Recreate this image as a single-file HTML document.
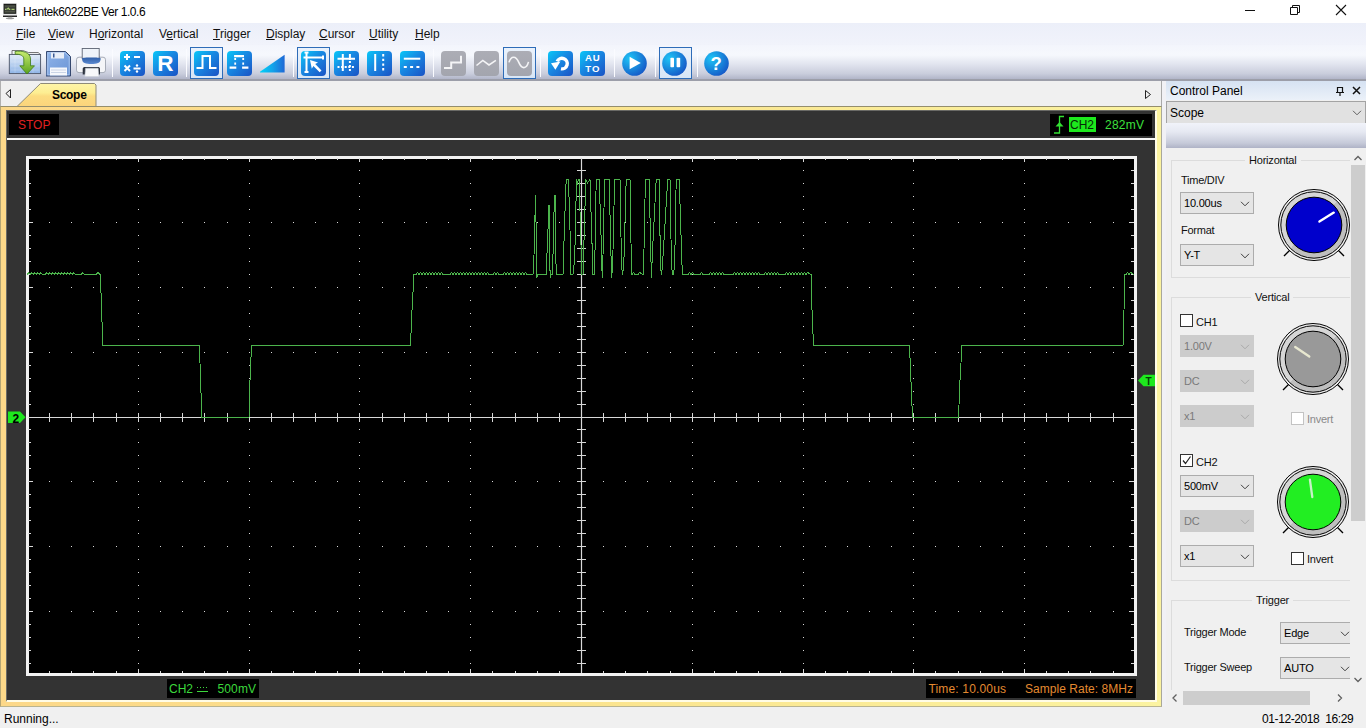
<!DOCTYPE html>
<html><head><meta charset="utf-8"><title>Hantek6022BE</title>
<style>
*{margin:0;padding:0;box-sizing:border-box}
html,body{width:1366px;height:728px;overflow:hidden;background:#f0f0f0;font-family:"Liberation Sans",sans-serif;font-size:12px;color:#000}
.a{position:absolute}
#title{left:0;top:0;width:1366px;height:23px;background:#fff}
#menu{left:0;top:23px;width:1366px;height:22px;background:linear-gradient(#eceff9,#f1f3fb)}
#menu span{position:absolute;top:4px;font-size:12px;color:#111}
#tool{left:0;top:45px;width:1366px;height:36px;background:linear-gradient(#f3f5fc 0%,#f6f8fd 28%,#e4e7f1 50%,#c9cddc 80%,#b2b6c9 94%,#9c9ea9 95%,#9c9ea9 100%)}
.sep{position:absolute;top:4px;width:1px;height:28px;background:#c9ccd6;border-right:1px solid #fafbff}
.btn{position:absolute;top:5px;width:25px;height:25px;border-radius:3px;background:linear-gradient(#2ea3f0,#0b64cf);}
.gbtn{position:absolute;top:5px;width:25px;height:25px;border-radius:3px;background:#a8abb2}
.press{position:absolute;top:2px;height:32px;border:1px solid #3d8bd8;background:#d6e6f6}
#tabs{left:0;top:81px;width:1162px;height:25px;background:#f0f0f0;border-right:1px solid #a9a9a9}
#cp{left:1166px;top:81px;width:200px;height:625px;background:#f0f0f0;font-size:11px;letter-spacing:-0.25px}
#status{left:0;top:707px;width:1366px;height:21px;background:#f0f0f0}
.dd{position:absolute;height:22px;border:1px solid #acacac;background:#e5e5e5;font-size:11px;padding:4px 0 0 3px;letter-spacing:-0.2px}
.dd.dis{border-color:#cccccc;background:#cccccc;color:#7a7a7a}
.chev{position:absolute;right:3px;top:8px;width:10px;height:6px}

.grp{position:absolute;border:1px solid #dcdcdc;border-radius:0}
.gt{position:absolute;background:#f0f0f0;padding:0 4px;font-size:11px;color:#111;letter-spacing:-0.2px}
.cb{position:absolute;width:13px;height:13px;border:1px solid #333;background:#fff}
</style></head><body>
<!-- title bar -->
<div id="title" class="a">
 <svg class="a" style="left:0;top:0" width="22" height="22" viewBox="0 0 22 22">
  <rect x="3" y="3.3" width="14" height="13.5" fill="#e6e6e6"/>
  <rect x="3.6" y="3.8" width="12.6" height="10" fill="#141414"/>
  <rect x="4.3" y="4.7" width="11.3" height="8.6" fill="#3a3f36"/>
  <path d="M4.8 6.2h10.3M4.8 11.6h10.3" stroke="#5a6052" stroke-width="0.8"/>
  <path d="M5 9.3h1.5M7 9.3l1.3-1.2l1 1.2h1M11.5 9.3h3" stroke="#a7c870" stroke-width="1.3"/>
  <rect x="3" y="15.6" width="14" height="1.3" fill="#111"/>
  <rect x="8" y="16.9" width="4" height="1" fill="#c8c8c8"/>
  <ellipse cx="10" cy="18.4" rx="4.2" ry="0.8" fill="#9a9a9a"/>
 </svg>
 <span class="a" style="left:23px;top:5px;font-size:12px;letter-spacing:-0.45px;color:#000">Hantek6022BE Ver 1.0.6</span>
 <svg class="a" style="left:1240px;top:0" width="126" height="23">
  <path d="M5 10.5h10" stroke="#111" stroke-width="1"/>
  <path d="M50.5 7.5h7v7h-7z M52.5 7.5v-2h7v7h-2" stroke="#111" stroke-width="1" fill="none"/>
  <path d="M96 5l10 10M106 5l-10 10" stroke="#111" stroke-width="1.1"/>
 </svg>
</div>
<!-- menu bar -->
<div id="menu" class="a">
 <span style="left:16px"><u>F</u>ile</span>
 <span style="left:48px"><u>V</u>iew</span>
 <span style="left:89px">H<u>o</u>rizontal</span>
 <span style="left:159px">V<u>e</u>rtical</span>
 <span style="left:213px"><u>T</u>rigger</span>
 <span style="left:266px"><u>D</u>isplay</span>
 <span style="left:319px"><u>C</u>ursor</span>
 <span style="left:369px"><u>U</u>tility</span>
 <span style="left:415px"><u>H</u>elp</span>
</div>
<!-- toolbar -->
<div id="tool" class="a">
<svg width="0" height="0" style="position:absolute"><defs>
<linearGradient id="bg" x1="0" y1="0" x2="1" y2="1"><stop offset="0" stop-color="#08c8f8"/><stop offset="0.45" stop-color="#1888e2"/><stop offset="1" stop-color="#1a52c4"/></linearGradient>
<linearGradient id="tri" x1="0" y1="0" x2="1" y2="0"><stop offset="0" stop-color="#00d2f8"/><stop offset="0.5" stop-color="#12a4ea"/><stop offset="1" stop-color="#1e68d6"/></linearGradient>
<radialGradient id="cg" cx="0.3" cy="0.3" r="0.8"><stop offset="0" stop-color="#1ec4f6"/><stop offset="1" stop-color="#1556c6"/></radialGradient>
<linearGradient id="gg" x1="0" y1="0" x2="0" y2="1"><stop offset="0" stop-color="#acadb5"/><stop offset="1" stop-color="#a3a5ae"/></linearGradient>
</defs></svg>
<div class="a" style="left:190px;top:2px;width:33px;height:32px;border:1px solid #2e6cb8;background:linear-gradient(#eaf2fc,#d8e6f6)"></div>
<div class="a" style="left:297px;top:2px;width:33px;height:32px;border:1px solid #2e6cb8;background:linear-gradient(#eaf2fc,#d8e6f6)"></div>
<div class="a" style="left:503px;top:2px;width:33px;height:32px;border:1px solid #2e6cb8;background:linear-gradient(#eaf2fc,#d8e6f6)"></div>
<div class="a" style="left:659px;top:2px;width:33px;height:32px;border:1px solid #2e6cb8;background:linear-gradient(#eaf2fc,#d8e6f6)"></div>
<div class="sep" style="left:112px"></div>
<div class="sep" style="left:186px"></div>
<div class="sep" style="left:293px"></div>
<div class="sep" style="left:433px"></div>
<div class="sep" style="left:540px"></div>
<div class="sep" style="left:614px"></div>
<div class="sep" style="left:655px"></div>
<div class="sep" style="left:697px"></div>
<svg class="a" style="left:8px;top:4px" width="34" height="28" viewBox="0 0 34 28">
<defs><linearGradient id="fgb" x1="0" y1="0" x2="0" y2="1"><stop offset="0" stop-color="#e2ecf8"/><stop offset="1" stop-color="#8fb4e6"/></linearGradient>
<linearGradient id="fga" x1="0" y1="0" x2="0" y2="1"><stop offset="0" stop-color="#c8ec70"/><stop offset="1" stop-color="#5aa21e"/></linearGradient></defs>
<path d="M4 5.5V1.5h10.8l5.6 2h9.8l2.4 2.3z" fill="#f4f6f8" stroke="#555" stroke-width="0.8"/>
<rect x="1.3" y="5.4" width="31.3" height="19.2" fill="url(#fgb)" stroke="#4b5366" stroke-width="0.9"/>
<path d="M3 9h28M3 13h28M3 17h28M3 21h28M7 6v18M13 6v18M19 6v18M25 6v18" stroke="#ffffff" stroke-opacity="0.35" stroke-width="0.5"/>
<path d="M7 2.5C14 1.5 22.5 3 22.5 10V16.8H26.5L19 25L11.8 16.8H15.8V10C15.8 6.5 12 5 7.3 5.3Z" fill="url(#fga)" stroke="#3f7a16" stroke-width="0.8"/>
</svg>
<svg class="a" style="left:46px;top:6px" width="26" height="26" viewBox="0 0 26 26">
<defs><linearGradient id="svb" x1="0" y1="0" x2="1" y2="1"><stop offset="0" stop-color="#8fb4ea"/><stop offset="1" stop-color="#6b94d4"/></linearGradient></defs><path d="M0.5 0.5h19l5 5v19.5h-24.5z" fill="url(#svb)" stroke="#34476e"/><path d="M1.8 1.8h17.2l4.2 4.2v17.8h-21.4z" fill="none" stroke="#b8d0f2" stroke-width="0.7"/>
<rect x="5" y="1.5" width="13" height="6" fill="#e8eef8"/><rect x="7" y="2.5" width="1.5" height="4" fill="#3b5a94"/>
<rect x="4" y="16.5" width="17" height="8" fill="#f6f8fc"/><path d="M5 19h15M5 21.5h15" stroke="#b9c6dc" stroke-width="0.7"/>
</svg>
<svg class="a" style="left:76px;top:3px" width="31" height="30" viewBox="0 0 31 30">
<defs><linearGradient id="pbl" x1="0" y1="0" x2="0" y2="1"><stop offset="0" stop-color="#2f5ea6"/><stop offset="1" stop-color="#5d8bd2"/></linearGradient></defs>
<rect x="0.5" y="9.2" width="29" height="15.4" rx="2.5" fill="#f4f5f8" stroke="#9ea4b0" stroke-width="0.9"/>
<rect x="6.2" y="0.5" width="17" height="10" fill="#eef3f9" stroke="#5c6473" stroke-width="0.9"/>
<path d="M6 10.3C6 15.6 10 16 15.3 16S24.7 15.6 24.7 10.3C24.7 9.2 6 9.2 6 10.3Z" fill="url(#pbl)"/>
<path d="M6.7 26.5V21c0-1.5 1-2 2.5-2h12.5c1.5 0 2.3 0.5 2.3 2V26.5z" fill="#2e3440"/>
<path d="M9.5 20.2h12.7l0.6 8.3h-13.9z" fill="#f7f8fa" stroke="#c9ced6" stroke-width="0.5"/>
</svg>
<svg class="a" style="left:120px;top:6px" width="26" height="26" viewBox="0 0 26 26"><rect x="0" y="0" width="25" height="25" rx="4" fill="url(#bg)"/><path d="M4 6h6M7 3v6M14 6h6M4.5 14.5l5.5 5.5M10 14.5l-5.5 5.5M13.5 17.5h7" stroke="#fff" stroke-width="2" fill="none"/><circle cx="17" cy="14.5" r="1.2" fill="#fff"/><circle cx="17" cy="20.5" r="1.2" fill="#fff"/></svg>
<svg class="a" style="left:153px;top:6px" width="26" height="26" viewBox="0 0 26 26"><rect x="0" y="0" width="25" height="25" rx="4" fill="url(#bg)"/><text x="12.3" y="20.2" text-anchor="middle" font-family="Liberation Sans" font-weight="bold" font-size="22.5" fill="#fff">R</text></svg>
<svg class="a" style="left:194px;top:6px" width="26" height="26" viewBox="0 0 26 26"><rect x="0" y="0" width="25" height="25" rx="4" fill="url(#bg)"/><path d="M2.5 17h6v-12h7.5v12h6.5" stroke="#fff" stroke-width="2" fill="none"/></svg>
<svg class="a" style="left:227px;top:6px" width="26" height="26" viewBox="0 0 26 26"><rect x="0" y="0" width="25" height="25" rx="4" fill="url(#bg)"/><path d="M2.6 16.7h6.7M15.1 16.7h6.3M7.1 5.1h9.9" stroke="#fff" stroke-width="2.2" fill="none"/><path d="M8.2 7.1v2M8.2 11.5v2.2M16.2 7.1v2M16.2 11.5v2.2" stroke="#fff" stroke-width="1.8" fill="none"/></svg>
<svg class="a" style="left:259px;top:9px" width="27" height="20" viewBox="0 0 27 20"><path d="M1 17.7L25.6 0.8V18.6H1z" fill="url(#tri)"/></svg>
<svg class="a" style="left:301px;top:6px" width="26" height="26" viewBox="0 0 26 26"><rect x="0" y="0" width="25" height="25" rx="4" fill="url(#bg)"/><path d="M5.5 1.5v19.5M3.5 1.5h4M3.5 21h4M2.5 6.5h19.5M22 4.5v4" stroke="#fff" stroke-width="2" fill="none"/><path d="M9 9l8 2.5l-2.8 1.6l6.3 6.3l-1.8 1.8l-6.3-6.3l-1.6 2.8z" fill="#fff"/></svg>
<svg class="a" style="left:334px;top:6px" width="26" height="26" viewBox="0 0 26 26"><rect x="0" y="0" width="25" height="25" rx="4" fill="url(#bg)"/><path d="M8.8 3v17M3.5 7.7h17.5M15.9 3v6" stroke="#fff" stroke-width="2" fill="none"/><path d="M15.9 10v10" stroke="#fff" stroke-width="2" stroke-dasharray="2 2" fill="none"/><path d="M3.5 15.9h17.5" stroke="#fff" stroke-width="2" stroke-dasharray="2 1.6" fill="none"/></svg>
<svg class="a" style="left:367px;top:6px" width="26" height="26" viewBox="0 0 26 26"><rect x="0" y="0" width="25" height="25" rx="4" fill="url(#bg)"/><path d="M8.2 3v17" stroke="#fff" stroke-width="2"/><path d="M16.2 3v17" stroke="#fff" stroke-width="2" stroke-dasharray="2.4 2.3"/></svg>
<svg class="a" style="left:400px;top:6px" width="26" height="26" viewBox="0 0 26 26"><rect x="0" y="0" width="25" height="25" rx="4" fill="url(#bg)"/><path d="M3.8 7.7h16.5" stroke="#fff" stroke-width="2"/><path d="M3.8 15.9h16.5" stroke="#fff" stroke-width="2" stroke-dasharray="3 3.3"/></svg>
<svg class="a" style="left:441px;top:6px" width="26" height="26" viewBox="0 0 26 26"><rect x="0" y="0" width="25" height="25" rx="4" fill="url(#gg)"/><path d="M3 17h7.2v-5.6h9.8v-6.7" stroke="#f4f4f6" stroke-width="2" fill="none"/></svg>
<svg class="a" style="left:474px;top:6px" width="26" height="26" viewBox="0 0 26 26"><rect x="0" y="0" width="25" height="25" rx="4" fill="url(#gg)"/><path d="M2.5 14.5l6.3-5.1l6.2 4.6l6.9-4.6" stroke="#f4f4f6" stroke-width="1.6" fill="none"/></svg>
<svg class="a" style="left:507px;top:6px" width="26" height="26" viewBox="0 0 26 26"><rect x="0" y="0" width="25" height="25" rx="4" fill="url(#gg)"/><path d="M2 11.4C4 4.5 9 4.5 11.8 11.4S19.5 18.5 21.5 10.9" stroke="#f4f4f6" stroke-width="1.6" fill="none"/></svg>
<svg class="a" style="left:548px;top:6px" width="26" height="26" viewBox="0 0 26 26"><rect x="0" y="0" width="25" height="25" rx="4" fill="url(#bg)"/><path d="M9.1 10.4A5.3 5.3 0 1 1 13 17.8" stroke="#fff" stroke-width="3.4" fill="none"/><path d="M3 12.2L12.4 10.6L7.4 18.8Z" fill="#fff"/></svg>
<svg class="a" style="left:580px;top:6px" width="26" height="26" viewBox="0 0 26 26"><rect x="0" y="0" width="25" height="25" rx="4" fill="url(#bg)"/><text x="12.8" y="10.2" text-anchor="middle" font-family="Liberation Sans" font-weight="bold" font-size="9.6" letter-spacing="0.9" fill="#fff">AU</text><text x="12.8" y="21.2" text-anchor="middle" font-family="Liberation Sans" font-weight="bold" font-size="9.6" letter-spacing="0.9" fill="#fff">TO</text></svg>
<svg class="a" style="left:622px;top:6px" width="26" height="26" viewBox="0 0 26 26"><circle cx="12.5" cy="12.5" r="12.3" fill="url(#cg)"/><path d="M7.6 5.8L18.8 12L7.6 18.2z" fill="#fff"/></svg>
<svg class="a" style="left:662px;top:6px" width="26" height="26" viewBox="0 0 26 26"><circle cx="12.5" cy="12.5" r="12.3" fill="url(#cg)"/><rect x="8.4" y="6.7" width="3.6" height="9.6" rx="0.8" fill="#fff"/><rect x="14.6" y="6.7" width="3.6" height="9.6" rx="0.8" fill="#fff"/></svg>
<svg class="a" style="left:704px;top:6px" width="26" height="26" viewBox="0 0 26 26"><circle cx="12.5" cy="12.5" r="12.3" fill="url(#cg)"/><text x="12.2" y="19.4" text-anchor="middle" font-family="Liberation Sans" font-weight="bold" font-size="18.5" fill="#fff">?</text></svg>
</div>
<!-- tab strip -->
<div id="tabs" class="a">
 <svg class="a" style="left:0;top:0" width="1161" height="26">
  <path d="M10.5 8.5l-4.5 4l4.5 4.5z" fill="none" stroke="#222" stroke-width="1"/>
  <path d="M17 25.5L40.5 2.5h54l1.5 1.5V25.5" fill="url(#tabg)" stroke="#8f8b78" stroke-width="1"/>
  <defs><linearGradient id="tabg" x1="0" y1="0" x2="0" y2="1"><stop offset="0" stop-color="#fff5a8"/><stop offset="0.4" stop-color="#fdee92"/><stop offset="0.55" stop-color="#fcdc80"/><stop offset="1" stop-color="#fbd47c"/></linearGradient></defs>
  <path d="M0.5 0V26" stroke="#b0b0b0" stroke-width="1"/>
  <path d="M1145.5 9.5l5 4l-5 4z" fill="none" stroke="#222" stroke-width="1"/>
 </svg>
 <span class="a" style="left:52px;top:7px;font-weight:bold;font-size:12px;letter-spacing:-0.3px">Scope</span>
</div>
<!-- scope frame -->
<div class="a" style="left:0;top:106px;width:1162px;height:601px;background:linear-gradient(90deg,#fcd889 0%,#fbe28c 45%,#fbf3a0 100%);border-top:1px solid #958e6c;border-left:1px solid #b5a675;border-right:1px solid #a9a89a;border-bottom:1px solid #b9b490"></div>
<div class="a" style="left:6px;top:110px;width:1151px;height:592px;border-top:1px solid #6a6a66;border-left:1px solid #6a6a66;border-right:2px solid #fffce6;border-bottom:2px solid #fffce6"></div>
<div class="a" style="left:7px;top:111px;width:1148px;height:589px;background:#333"></div>
<div class="a" style="left:1162px;top:81px;width:4px;height:625px;background:#f1f1f5"></div>
<svg class="a" style="left:0;top:0" width="1161" height="706">
 <rect x="9" y="114" width="50" height="21" fill="#000"/>
 <text x="18" y="129" font-family="Liberation Sans" font-size="12" fill="#e02020">STOP</text>
 <rect x="1050" y="114" width="102" height="22" fill="#000"/>
 <path d="M1054 133h5.5v-16.5h4.5" stroke="#33e033" stroke-width="1.3" fill="none"/>
 <path d="M1059.5 122l-4 4.5h8z" fill="#33e033"/>
 <rect x="1069" y="117" width="27" height="15" fill="#1de81d"/>
 <text x="1070" y="129" font-family="Liberation Sans" font-size="12" textLength="24" fill="#062806">CH2</text>
 <text x="1105" y="129" font-family="Liberation Sans" font-size="12" textLength="39" fill="#3ee03e">282mV</text>
 <rect x="7" y="138" width="1148" height="2" fill="#f8f8f8"/>
 <rect x="27.5" y="157.5" width="1108" height="517" fill="#000" stroke="#f2f2f2" stroke-width="3"/>
 <path d="M49 222h1v1h-1zM49 287h1v1h-1zM49 352h1v1h-1zM49 481h1v1h-1zM49 546h1v1h-1zM49 611h1v1h-1zM71 222h1v1h-1zM71 287h1v1h-1zM71 352h1v1h-1zM71 481h1v1h-1zM71 546h1v1h-1zM71 611h1v1h-1zM93 222h1v1h-1zM93 287h1v1h-1zM93 352h1v1h-1zM93 481h1v1h-1zM93 546h1v1h-1zM93 611h1v1h-1zM116 222h1v1h-1zM116 287h1v1h-1zM116 352h1v1h-1zM116 481h1v1h-1zM116 546h1v1h-1zM116 611h1v1h-1zM138 170h1v1h-1zM138 183h1v1h-1zM138 196h1v1h-1zM138 209h1v1h-1zM138 222h1v1h-1zM138 235h1v1h-1zM138 248h1v1h-1zM138 261h1v1h-1zM138 274h1v1h-1zM138 287h1v1h-1zM138 300h1v1h-1zM138 313h1v1h-1zM138 326h1v1h-1zM138 339h1v1h-1zM138 352h1v1h-1zM138 365h1v1h-1zM138 378h1v1h-1zM138 391h1v1h-1zM138 404h1v1h-1zM138 429h1v1h-1zM138 442h1v1h-1zM138 455h1v1h-1zM138 468h1v1h-1zM138 481h1v1h-1zM138 494h1v1h-1zM138 507h1v1h-1zM138 520h1v1h-1zM138 533h1v1h-1zM138 546h1v1h-1zM138 559h1v1h-1zM138 572h1v1h-1zM138 585h1v1h-1zM138 598h1v1h-1zM138 611h1v1h-1zM138 624h1v1h-1zM138 637h1v1h-1zM138 650h1v1h-1zM138 663h1v1h-1zM160 222h1v1h-1zM160 287h1v1h-1zM160 352h1v1h-1zM160 481h1v1h-1zM160 546h1v1h-1zM160 611h1v1h-1zM182 222h1v1h-1zM182 287h1v1h-1zM182 352h1v1h-1zM182 481h1v1h-1zM182 546h1v1h-1zM182 611h1v1h-1zM204 222h1v1h-1zM204 287h1v1h-1zM204 352h1v1h-1zM204 481h1v1h-1zM204 546h1v1h-1zM204 611h1v1h-1zM227 222h1v1h-1zM227 287h1v1h-1zM227 352h1v1h-1zM227 481h1v1h-1zM227 546h1v1h-1zM227 611h1v1h-1zM249 170h1v1h-1zM249 183h1v1h-1zM249 196h1v1h-1zM249 209h1v1h-1zM249 222h1v1h-1zM249 235h1v1h-1zM249 248h1v1h-1zM249 261h1v1h-1zM249 274h1v1h-1zM249 287h1v1h-1zM249 300h1v1h-1zM249 313h1v1h-1zM249 326h1v1h-1zM249 339h1v1h-1zM249 352h1v1h-1zM249 365h1v1h-1zM249 378h1v1h-1zM249 391h1v1h-1zM249 404h1v1h-1zM249 429h1v1h-1zM249 442h1v1h-1zM249 455h1v1h-1zM249 468h1v1h-1zM249 481h1v1h-1zM249 494h1v1h-1zM249 507h1v1h-1zM249 520h1v1h-1zM249 533h1v1h-1zM249 546h1v1h-1zM249 559h1v1h-1zM249 572h1v1h-1zM249 585h1v1h-1zM249 598h1v1h-1zM249 611h1v1h-1zM249 624h1v1h-1zM249 637h1v1h-1zM249 650h1v1h-1zM249 663h1v1h-1zM271 222h1v1h-1zM271 287h1v1h-1zM271 352h1v1h-1zM271 481h1v1h-1zM271 546h1v1h-1zM271 611h1v1h-1zM293 222h1v1h-1zM293 287h1v1h-1zM293 352h1v1h-1zM293 481h1v1h-1zM293 546h1v1h-1zM293 611h1v1h-1zM315 222h1v1h-1zM315 287h1v1h-1zM315 352h1v1h-1zM315 481h1v1h-1zM315 546h1v1h-1zM315 611h1v1h-1zM337 222h1v1h-1zM337 287h1v1h-1zM337 352h1v1h-1zM337 481h1v1h-1zM337 546h1v1h-1zM337 611h1v1h-1zM359 170h1v1h-1zM359 183h1v1h-1zM359 196h1v1h-1zM359 209h1v1h-1zM359 222h1v1h-1zM359 235h1v1h-1zM359 248h1v1h-1zM359 261h1v1h-1zM359 274h1v1h-1zM359 287h1v1h-1zM359 300h1v1h-1zM359 313h1v1h-1zM359 326h1v1h-1zM359 339h1v1h-1zM359 352h1v1h-1zM359 365h1v1h-1zM359 378h1v1h-1zM359 391h1v1h-1zM359 404h1v1h-1zM359 429h1v1h-1zM359 442h1v1h-1zM359 455h1v1h-1zM359 468h1v1h-1zM359 481h1v1h-1zM359 494h1v1h-1zM359 507h1v1h-1zM359 520h1v1h-1zM359 533h1v1h-1zM359 546h1v1h-1zM359 559h1v1h-1zM359 572h1v1h-1zM359 585h1v1h-1zM359 598h1v1h-1zM359 611h1v1h-1zM359 624h1v1h-1zM359 637h1v1h-1zM359 650h1v1h-1zM359 663h1v1h-1zM382 222h1v1h-1zM382 287h1v1h-1zM382 352h1v1h-1zM382 481h1v1h-1zM382 546h1v1h-1zM382 611h1v1h-1zM404 222h1v1h-1zM404 287h1v1h-1zM404 352h1v1h-1zM404 481h1v1h-1zM404 546h1v1h-1zM404 611h1v1h-1zM426 222h1v1h-1zM426 287h1v1h-1zM426 352h1v1h-1zM426 481h1v1h-1zM426 546h1v1h-1zM426 611h1v1h-1zM448 222h1v1h-1zM448 287h1v1h-1zM448 352h1v1h-1zM448 481h1v1h-1zM448 546h1v1h-1zM448 611h1v1h-1zM470 170h1v1h-1zM470 183h1v1h-1zM470 196h1v1h-1zM470 209h1v1h-1zM470 222h1v1h-1zM470 235h1v1h-1zM470 248h1v1h-1zM470 261h1v1h-1zM470 274h1v1h-1zM470 287h1v1h-1zM470 300h1v1h-1zM470 313h1v1h-1zM470 326h1v1h-1zM470 339h1v1h-1zM470 352h1v1h-1zM470 365h1v1h-1zM470 378h1v1h-1zM470 391h1v1h-1zM470 404h1v1h-1zM470 429h1v1h-1zM470 442h1v1h-1zM470 455h1v1h-1zM470 468h1v1h-1zM470 481h1v1h-1zM470 494h1v1h-1zM470 507h1v1h-1zM470 520h1v1h-1zM470 533h1v1h-1zM470 546h1v1h-1zM470 559h1v1h-1zM470 572h1v1h-1zM470 585h1v1h-1zM470 598h1v1h-1zM470 611h1v1h-1zM470 624h1v1h-1zM470 637h1v1h-1zM470 650h1v1h-1zM470 663h1v1h-1zM492 222h1v1h-1zM492 287h1v1h-1zM492 352h1v1h-1zM492 481h1v1h-1zM492 546h1v1h-1zM492 611h1v1h-1zM515 222h1v1h-1zM515 287h1v1h-1zM515 352h1v1h-1zM515 481h1v1h-1zM515 546h1v1h-1zM515 611h1v1h-1zM537 222h1v1h-1zM537 287h1v1h-1zM537 352h1v1h-1zM537 481h1v1h-1zM537 546h1v1h-1zM537 611h1v1h-1zM559 222h1v1h-1zM559 287h1v1h-1zM559 352h1v1h-1zM559 481h1v1h-1zM559 546h1v1h-1zM559 611h1v1h-1zM603 222h1v1h-1zM603 287h1v1h-1zM603 352h1v1h-1zM603 481h1v1h-1zM603 546h1v1h-1zM603 611h1v1h-1zM625 222h1v1h-1zM625 287h1v1h-1zM625 352h1v1h-1zM625 481h1v1h-1zM625 546h1v1h-1zM625 611h1v1h-1zM647 222h1v1h-1zM647 287h1v1h-1zM647 352h1v1h-1zM647 481h1v1h-1zM647 546h1v1h-1zM647 611h1v1h-1zM670 222h1v1h-1zM670 287h1v1h-1zM670 352h1v1h-1zM670 481h1v1h-1zM670 546h1v1h-1zM670 611h1v1h-1zM692 170h1v1h-1zM692 183h1v1h-1zM692 196h1v1h-1zM692 209h1v1h-1zM692 222h1v1h-1zM692 235h1v1h-1zM692 248h1v1h-1zM692 261h1v1h-1zM692 274h1v1h-1zM692 287h1v1h-1zM692 300h1v1h-1zM692 313h1v1h-1zM692 326h1v1h-1zM692 339h1v1h-1zM692 352h1v1h-1zM692 365h1v1h-1zM692 378h1v1h-1zM692 391h1v1h-1zM692 404h1v1h-1zM692 429h1v1h-1zM692 442h1v1h-1zM692 455h1v1h-1zM692 468h1v1h-1zM692 481h1v1h-1zM692 494h1v1h-1zM692 507h1v1h-1zM692 520h1v1h-1zM692 533h1v1h-1zM692 546h1v1h-1zM692 559h1v1h-1zM692 572h1v1h-1zM692 585h1v1h-1zM692 598h1v1h-1zM692 611h1v1h-1zM692 624h1v1h-1zM692 637h1v1h-1zM692 650h1v1h-1zM692 663h1v1h-1zM714 222h1v1h-1zM714 287h1v1h-1zM714 352h1v1h-1zM714 481h1v1h-1zM714 546h1v1h-1zM714 611h1v1h-1zM736 222h1v1h-1zM736 287h1v1h-1zM736 352h1v1h-1zM736 481h1v1h-1zM736 546h1v1h-1zM736 611h1v1h-1zM758 222h1v1h-1zM758 287h1v1h-1zM758 352h1v1h-1zM758 481h1v1h-1zM758 546h1v1h-1zM758 611h1v1h-1zM780 222h1v1h-1zM780 287h1v1h-1zM780 352h1v1h-1zM780 481h1v1h-1zM780 546h1v1h-1zM780 611h1v1h-1zM803 170h1v1h-1zM803 183h1v1h-1zM803 196h1v1h-1zM803 209h1v1h-1zM803 222h1v1h-1zM803 235h1v1h-1zM803 248h1v1h-1zM803 261h1v1h-1zM803 274h1v1h-1zM803 287h1v1h-1zM803 300h1v1h-1zM803 313h1v1h-1zM803 326h1v1h-1zM803 339h1v1h-1zM803 352h1v1h-1zM803 365h1v1h-1zM803 378h1v1h-1zM803 391h1v1h-1zM803 404h1v1h-1zM803 429h1v1h-1zM803 442h1v1h-1zM803 455h1v1h-1zM803 468h1v1h-1zM803 481h1v1h-1zM803 494h1v1h-1zM803 507h1v1h-1zM803 520h1v1h-1zM803 533h1v1h-1zM803 546h1v1h-1zM803 559h1v1h-1zM803 572h1v1h-1zM803 585h1v1h-1zM803 598h1v1h-1zM803 611h1v1h-1zM803 624h1v1h-1zM803 637h1v1h-1zM803 650h1v1h-1zM803 663h1v1h-1zM825 222h1v1h-1zM825 287h1v1h-1zM825 352h1v1h-1zM825 481h1v1h-1zM825 546h1v1h-1zM825 611h1v1h-1zM847 222h1v1h-1zM847 287h1v1h-1zM847 352h1v1h-1zM847 481h1v1h-1zM847 546h1v1h-1zM847 611h1v1h-1zM869 222h1v1h-1zM869 287h1v1h-1zM869 352h1v1h-1zM869 481h1v1h-1zM869 546h1v1h-1zM869 611h1v1h-1zM891 222h1v1h-1zM891 287h1v1h-1zM891 352h1v1h-1zM891 481h1v1h-1zM891 546h1v1h-1zM891 611h1v1h-1zM913 170h1v1h-1zM913 183h1v1h-1zM913 196h1v1h-1zM913 209h1v1h-1zM913 222h1v1h-1zM913 235h1v1h-1zM913 248h1v1h-1zM913 261h1v1h-1zM913 274h1v1h-1zM913 287h1v1h-1zM913 300h1v1h-1zM913 313h1v1h-1zM913 326h1v1h-1zM913 339h1v1h-1zM913 352h1v1h-1zM913 365h1v1h-1zM913 378h1v1h-1zM913 391h1v1h-1zM913 404h1v1h-1zM913 429h1v1h-1zM913 442h1v1h-1zM913 455h1v1h-1zM913 468h1v1h-1zM913 481h1v1h-1zM913 494h1v1h-1zM913 507h1v1h-1zM913 520h1v1h-1zM913 533h1v1h-1zM913 546h1v1h-1zM913 559h1v1h-1zM913 572h1v1h-1zM913 585h1v1h-1zM913 598h1v1h-1zM913 611h1v1h-1zM913 624h1v1h-1zM913 637h1v1h-1zM913 650h1v1h-1zM913 663h1v1h-1zM935 222h1v1h-1zM935 287h1v1h-1zM935 352h1v1h-1zM935 481h1v1h-1zM935 546h1v1h-1zM935 611h1v1h-1zM958 222h1v1h-1zM958 287h1v1h-1zM958 352h1v1h-1zM958 481h1v1h-1zM958 546h1v1h-1zM958 611h1v1h-1zM980 222h1v1h-1zM980 287h1v1h-1zM980 352h1v1h-1zM980 481h1v1h-1zM980 546h1v1h-1zM980 611h1v1h-1zM1002 222h1v1h-1zM1002 287h1v1h-1zM1002 352h1v1h-1zM1002 481h1v1h-1zM1002 546h1v1h-1zM1002 611h1v1h-1zM1024 170h1v1h-1zM1024 183h1v1h-1zM1024 196h1v1h-1zM1024 209h1v1h-1zM1024 222h1v1h-1zM1024 235h1v1h-1zM1024 248h1v1h-1zM1024 261h1v1h-1zM1024 274h1v1h-1zM1024 287h1v1h-1zM1024 300h1v1h-1zM1024 313h1v1h-1zM1024 326h1v1h-1zM1024 339h1v1h-1zM1024 352h1v1h-1zM1024 365h1v1h-1zM1024 378h1v1h-1zM1024 391h1v1h-1zM1024 404h1v1h-1zM1024 429h1v1h-1zM1024 442h1v1h-1zM1024 455h1v1h-1zM1024 468h1v1h-1zM1024 481h1v1h-1zM1024 494h1v1h-1zM1024 507h1v1h-1zM1024 520h1v1h-1zM1024 533h1v1h-1zM1024 546h1v1h-1zM1024 559h1v1h-1zM1024 572h1v1h-1zM1024 585h1v1h-1zM1024 598h1v1h-1zM1024 611h1v1h-1zM1024 624h1v1h-1zM1024 637h1v1h-1zM1024 650h1v1h-1zM1024 663h1v1h-1zM1046 222h1v1h-1zM1046 287h1v1h-1zM1046 352h1v1h-1zM1046 481h1v1h-1zM1046 546h1v1h-1zM1046 611h1v1h-1zM1068 222h1v1h-1zM1068 287h1v1h-1zM1068 352h1v1h-1zM1068 481h1v1h-1zM1068 546h1v1h-1zM1068 611h1v1h-1zM1090 222h1v1h-1zM1090 287h1v1h-1zM1090 352h1v1h-1zM1090 481h1v1h-1zM1090 546h1v1h-1zM1090 611h1v1h-1zM1113 222h1v1h-1zM1113 287h1v1h-1zM1113 352h1v1h-1zM1113 481h1v1h-1zM1113 546h1v1h-1zM1113 611h1v1h-1z" fill="#d8d8d8"/>
<path d="M49.5 158v2M49.5 671v2M49.5 413v9M71.5 158v2M71.5 671v2M71.5 413v9M93.5 158v2M93.5 671v2M93.5 413v9M116.5 158v2M116.5 671v2M116.5 413v9M138.5 158v4M138.5 669v4M138.5 413v9M160.5 158v2M160.5 671v2M160.5 413v9M182.5 158v2M182.5 671v2M182.5 413v9M204.5 158v2M204.5 671v2M204.5 413v9M227.5 158v2M227.5 671v2M227.5 413v9M249.5 158v4M249.5 669v4M249.5 413v9M271.5 158v2M271.5 671v2M271.5 413v9M293.5 158v2M293.5 671v2M293.5 413v9M315.5 158v2M315.5 671v2M315.5 413v9M337.5 158v2M337.5 671v2M337.5 413v9M359.5 158v4M359.5 669v4M359.5 413v9M382.5 158v2M382.5 671v2M382.5 413v9M404.5 158v2M404.5 671v2M404.5 413v9M426.5 158v2M426.5 671v2M426.5 413v9M448.5 158v2M448.5 671v2M448.5 413v9M470.5 158v4M470.5 669v4M470.5 413v9M492.5 158v2M492.5 671v2M492.5 413v9M515.5 158v2M515.5 671v2M515.5 413v9M537.5 158v2M537.5 671v2M537.5 413v9M559.5 158v2M559.5 671v2M559.5 413v9M603.5 158v2M603.5 671v2M603.5 413v9M625.5 158v2M625.5 671v2M625.5 413v9M647.5 158v2M647.5 671v2M647.5 413v9M670.5 158v2M670.5 671v2M670.5 413v9M692.5 158v4M692.5 669v4M692.5 413v9M714.5 158v2M714.5 671v2M714.5 413v9M736.5 158v2M736.5 671v2M736.5 413v9M758.5 158v2M758.5 671v2M758.5 413v9M780.5 158v2M780.5 671v2M780.5 413v9M803.5 158v4M803.5 669v4M803.5 413v9M825.5 158v2M825.5 671v2M825.5 413v9M847.5 158v2M847.5 671v2M847.5 413v9M869.5 158v2M869.5 671v2M869.5 413v9M891.5 158v2M891.5 671v2M891.5 413v9M913.5 158v4M913.5 669v4M913.5 413v9M935.5 158v2M935.5 671v2M935.5 413v9M958.5 158v2M958.5 671v2M958.5 413v9M980.5 158v2M980.5 671v2M980.5 413v9M1002.5 158v2M1002.5 671v2M1002.5 413v9M1024.5 158v4M1024.5 669v4M1024.5 413v9M1046.5 158v2M1046.5 671v2M1046.5 413v9M1068.5 158v2M1068.5 671v2M1068.5 413v9M1090.5 158v2M1090.5 671v2M1090.5 413v9M1113.5 158v2M1113.5 671v2M1113.5 413v9M28 170.5h3M1131 170.5h3M577 170.5h9M28 183.5h3M1131 183.5h3M577 183.5h9M28 196.5h3M1131 196.5h3M577 196.5h9M28 209.5h3M1131 209.5h3M577 209.5h9M28 222.5h5M1129 222.5h5M577 222.5h9M28 235.5h3M1131 235.5h3M577 235.5h9M28 248.5h3M1131 248.5h3M577 248.5h9M28 261.5h3M1131 261.5h3M577 261.5h9M28 274.5h3M1131 274.5h3M577 274.5h9M28 287.5h5M1129 287.5h5M577 287.5h9M28 300.5h3M1131 300.5h3M577 300.5h9M28 313.5h3M1131 313.5h3M577 313.5h9M28 326.5h3M1131 326.5h3M577 326.5h9M28 339.5h3M1131 339.5h3M577 339.5h9M28 352.5h5M1129 352.5h5M577 352.5h9M28 365.5h3M1131 365.5h3M577 365.5h9M28 378.5h3M1131 378.5h3M577 378.5h9M28 391.5h3M1131 391.5h3M577 391.5h9M28 404.5h3M1131 404.5h3M577 404.5h9M28 429.5h3M1131 429.5h3M577 429.5h9M28 442.5h3M1131 442.5h3M577 442.5h9M28 455.5h3M1131 455.5h3M577 455.5h9M28 468.5h3M1131 468.5h3M577 468.5h9M28 481.5h5M1129 481.5h5M577 481.5h9M28 494.5h3M1131 494.5h3M577 494.5h9M28 507.5h3M1131 507.5h3M577 507.5h9M28 520.5h3M1131 520.5h3M577 520.5h9M28 533.5h3M1131 533.5h3M577 533.5h9M28 546.5h5M1129 546.5h5M577 546.5h9M28 559.5h3M1131 559.5h3M577 559.5h9M28 572.5h3M1131 572.5h3M577 572.5h9M28 585.5h3M1131 585.5h3M577 585.5h9M28 598.5h3M1131 598.5h3M577 598.5h9M28 611.5h5M1129 611.5h5M577 611.5h9M28 624.5h3M1131 624.5h3M577 624.5h9M28 637.5h3M1131 637.5h3M577 637.5h9M28 650.5h3M1131 650.5h3M577 650.5h9M28 663.5h3M1131 663.5h3M577 663.5h9" stroke="#d8d8d8" stroke-width="1" fill="none"/>
<path d="M28 417.5H1134 M581.5 158V673" stroke="#d8d8d8" stroke-width="1.2" fill="none"/>
 <polyline points="27.2,274.5 28.8,272.5 30.2,274.5 31.8,272.5 33.2,274.5 34.8,272.5 36.2,274.5 37.8,272.5 39.2,274.5 40.8,272.5 42.2,274.5 45.2,274.5 46.8,272.5 48.2,274.5 49.8,272.5 51.2,274.5 52.8,272.5 54.2,274.5 55.8,272.5 57.2,274.5 58.8,272.5 60.2,274.5 61.8,272.5 63.2,274.5 64.8,272.5 66.2,274.5 67.8,272.5 69.2,274.5 70.8,272.5 72.2,274.5 73.8,272.5 75.2,274.5 81.2,274.5 82.8,272.5 84.2,274.5 87.2,274.5 93.2,274.5 96.2,274.5 97.8,272.5 100.0,274.5 100.5,274.5 101.5,310.0 103.0,345.5 199.5,345.5 200.5,380.0 202.0,417.5 249.0,417.5 250.0,380.0 251.5,345.5 410.5,345.5 412.0,310.0 414.0,274.5 416.0,274.5 417.5,272.5 419.0,274.5 420.5,272.5 422.0,274.5 423.5,272.5 425.0,274.5 426.5,272.5 428.0,274.5 429.5,272.5 431.0,274.5 432.5,272.5 434.0,274.5 435.5,272.5 437.0,274.5 438.5,272.5 440.0,274.5 441.5,272.5 443.0,274.5 447.0,274.5 450.0,274.5 451.5,272.5 453.0,274.5 454.5,272.5 456.0,274.5 457.5,272.5 459.0,274.5 460.5,272.5 462.0,274.5 463.5,272.5 465.0,274.5 466.5,272.5 468.0,274.5 469.5,272.5 471.0,274.5 472.5,272.5 474.0,274.5 475.5,272.5 477.0,274.5 478.5,272.5 480.0,274.5 481.5,272.5 483.0,274.5 484.5,272.5 486.0,274.5 487.5,272.5 489.0,274.5 493.0,274.5 494.5,272.5 496.0,274.5 497.5,272.5 499.0,274.5 503.0,274.5 504.5,272.5 506.0,274.5 507.5,272.5 509.0,274.5 510.5,272.5 512.0,274.5 513.5,272.5 515.0,274.5 516.5,272.5 518.0,274.5 519.5,272.5 521.0,274.5 522.5,272.5 524.0,274.5 525.5,272.5 527.0,274.5 533.0,274.5 533.0,274.5 534.0,255.0 535.0,215.0 535.5,195.0 536.3,237.0 536.8,278.0 538.0,274.5 546.5,274.5 547.3,240.0 548.3,225.0 548.6,205.0 549.3,205.0 549.6,260.0 550.3,278.0 551.0,274.5 552.5,274.5 553.5,235.0 554.4,195.0 555.1,195.0 555.5,235.0 556.2,274.5 563.0,274.5 564.5,225.0 566.2,179.5 568.5,179.5 570.0,230.0 571.0,274.5 573.0,274.5 574.7,258.0 575.8,213.0 576.4,179.5 577.5,183.0 578.5,179.5 579.2,179.5 580.5,230.0 582.0,274.5 583.0,274.5 585.8,179.5 587.5,183.0 590.0,179.5 593.0,274.5 594.6,274.5 596.2,179.5 599.2,179.5 601.5,250.0 602.2,278.0 603.0,255.0 604.6,179.5 609.2,179.5 610.8,250.0 611.8,278.0 613.0,250.0 614.6,179.5 620.0,179.5 621.5,265.0 622.5,274.5 623.8,265.0 626.2,179.5 630.0,179.5 631.5,274.5 632.0,274.5 633.5,272.5 635.0,274.5 638.0,274.5 639.5,272.5 643.0,274.5 643.5,274.5 645.4,179.5 649.2,179.5 650.8,255.0 651.5,278.0 652.3,255.0 656.2,179.5 659.2,179.5 660.5,268.0 661.5,274.5 662.3,268.0 667.7,179.5 670.0,179.5 671.5,268.0 673.0,274.5 674.6,268.0 676.2,179.5 679.2,179.5 682.3,274.5 684.0,274.5 688.0,274.5 689.5,272.5 691.0,274.5 692.5,272.5 694.0,274.5 700.0,274.5 701.5,272.5 703.0,274.5 709.0,274.5 710.5,272.5 712.0,274.5 713.5,272.5 715.0,274.5 716.5,272.5 718.0,274.5 719.5,272.5 721.0,274.5 722.5,272.5 724.0,274.5 727.0,274.5 733.0,274.5 734.5,272.5 736.0,274.5 737.5,272.5 739.0,274.5 740.5,272.5 742.0,274.5 743.5,272.5 745.0,274.5 746.5,272.5 748.0,274.5 749.5,272.5 751.0,274.5 752.5,272.5 754.0,274.5 755.5,272.5 757.0,274.5 758.5,272.5 760.0,274.5 764.0,274.5 765.5,272.5 767.0,274.5 768.5,272.5 770.0,274.5 771.5,272.5 773.0,274.5 774.5,272.5 776.0,274.5 777.5,272.5 779.0,274.5 785.0,274.5 786.5,272.5 788.0,274.5 789.5,272.5 791.0,274.5 792.5,272.5 794.0,274.5 795.5,272.5 797.0,274.5 798.5,272.5 800.0,274.5 801.5,272.5 803.0,274.5 804.5,272.5 806.0,274.5 807.5,272.5 811.0,274.5 811.5,274.5 812.0,310.0 813.5,345.5 909.5,345.5 910.5,370.0 912.5,417.5 958.5,417.5 960.0,380.0 962.0,345.5 1123.0,345.5 1124.0,310.0 1125.0,274.5 1126.0,274.5 1127.5,272.5 1129.0,274.5 1130.5,272.5 1134.2,274.5" fill="none" stroke="#4cb44c" stroke-width="1" stroke-linejoin="miter" shape-rendering="crispEdges"/>
 <path d="M8 411.5h12l5.5 5.8l-5.5 5.7h-12z" fill="#1ee81e"/>
 <text x="12.5" y="422.5" font-family="Liberation Sans" font-size="12" font-weight="bold" fill="#000">2</text>
 <path d="M1138 380.5l5.5-5.8h11.5v11.6h-11.5z" fill="#1ee81e"/>
 <text x="1145.5" y="384.8" font-family="Liberation Sans" font-size="10" font-weight="bold" fill="#064006">T</text>
 <rect x="167" y="679" width="92" height="19" fill="#000"/>
 <text x="169" y="693" font-family="Liberation Sans" font-size="12" fill="#3cd83c">CH2</text>
 <path d="M197 687.5h11" stroke="#3cd83c" stroke-width="1" stroke-dasharray="1 2"/>
 <path d="M197 691.5h11" stroke="#3cd83c" stroke-width="1"/>
 <text x="217.5" y="693" font-family="Liberation Sans" font-size="12" textLength="38.5" fill="#3cd83c">500mV</text>
 <rect x="926" y="679" width="210" height="19" fill="#000"/>
 <text x="928.5" y="693" font-family="Liberation Sans" font-size="12" textLength="77.5" fill="#e48a30">Time: 10.00us</text>
 <text x="1025" y="693" font-family="Liberation Sans" font-size="12" textLength="108" fill="#e48a30">Sample Rate: 8MHz</text>
</svg>
<!-- control panel -->
<div id="cp" class="a">
<div class="a" style="left:0;top:0;width:200px;height:19px;background:linear-gradient(#d6e2f2,#ebf1f9)"></div>
<span class="a" style="left:4px;top:3px;font-size:12px;letter-spacing:0">Control Panel</span>
<svg class="a" style="left:168px;top:4px" width="32" height="12"><path d="M3.5 2.5h5v5h-5z M2 7.5h8M6 8v3" stroke="#111" stroke-width="1.2" fill="none"/><path d="M19 2l7 7M26 2l-7 7" stroke="#111" stroke-width="1.5"/></svg>
<div class="dd" style="left:0;top:20px;width:200px;height:23px;background:#e1e1e1;border-color:#a3a3a3;padding-top:4px;font-size:12px;letter-spacing:0">Scope<svg class="chev" viewBox="0 0 10 6"><path d="M1 0.8l4 4l4-4" stroke="#606060" stroke-width="1" fill="none"/></svg></div>
<div class="a" style="left:0;top:42px;width:200px;height:25px;background:linear-gradient(#f1f3fa 0%,#e6e9f2 35%,#c6cad9 80%,#afb3c6 100%)"></div>
<div class="a" style="left:0;top:67px;width:184px;height:542px;background:#f0f0f0;overflow:hidden"><div class="grp" style="left:5px;top:12px;width:200px;height:118px"></div>
<span class="gt" style="left:79px;top:6px">Horizontal</span>
<div class="grp" style="left:5px;top:149px;width:200px;height:284px"></div>
<span class="gt" style="left:85px;top:143px">Vertical</span>
<div class="grp" style="left:5px;top:452px;width:200px;height:120px"></div>
<span class="gt" style="left:86px;top:446px">Trigger</span>
<span class="a" style="left:15px;top:26px;color:#111">Time/DIV</span>
<div class="dd" style="left:14px;top:44px;width:74px">10.00us<svg class="chev" viewBox="0 0 10 6"><path d="M1 0.8l4 4l4-4" stroke="#404040" stroke-width="1" fill="none"/></svg></div>
<span class="a" style="left:15px;top:76px;color:#111">Format</span>
<div class="dd" style="left:14px;top:96px;width:74px">Y-T<svg class="chev" viewBox="0 0 10 6"><path d="M1 0.8l4 4l4-4" stroke="#404040" stroke-width="1" fill="none"/></svg></div>
<svg class="a" style="left:102.5px;top:31.8px" width="90" height="90" viewBox="0 0 90 90"><defs><linearGradient id="kb" x1="0" y1="0" x2="1" y2="1"><stop offset="0.5" stop-color="#d6d6d6"/><stop offset="0.5" stop-color="#bfbfbf"/></linearGradient></defs><path d="M15 76l9.5-9.5M75 76l-9.5-9.5" stroke="#000" stroke-width="1.4"/><circle cx="45" cy="45" r="35.5" fill="#f0f0f0" stroke="#000" stroke-width="1"/><circle cx="45" cy="45" r="33.2" fill="url(#kb)" stroke="#000" stroke-width="1"/><circle cx="45" cy="45" r="27.8" fill="#0000cc" stroke="#000" stroke-width="1"/><path d="M50.4 41.6L64.8 32.6" stroke="#fff" stroke-width="2.3" stroke-linecap="round"/></svg>
<div class="cb" style="left:14px;top:166px"></div>
<span class="a" style="left:30px;top:168px;color:#111">CH1</span>
<div class="dd dis" style="left:14px;top:187px;width:74px">1.00V<svg class="chev" viewBox="0 0 10 6"><path d="M1 0.8l4 4l4-4" stroke="#a9a9a9" stroke-width="1" fill="none"/></svg></div>
<div class="dd dis" style="left:14px;top:222px;width:74px">DC<svg class="chev" viewBox="0 0 10 6"><path d="M1 0.8l4 4l4-4" stroke="#a9a9a9" stroke-width="1" fill="none"/></svg></div>
<div class="dd dis" style="left:14px;top:257px;width:74px">x1<svg class="chev" viewBox="0 0 10 6"><path d="M1 0.8l4 4l4-4" stroke="#a9a9a9" stroke-width="1" fill="none"/></svg></div>
<svg class="a" style="left:102.0px;top:165.6px" width="90" height="90" viewBox="0 0 90 90"><defs><linearGradient id="kb" x1="0" y1="0" x2="1" y2="1"><stop offset="0.5" stop-color="#d6d6d6"/><stop offset="0.5" stop-color="#bfbfbf"/></linearGradient></defs><path d="M15 76l9.5-9.5M75 76l-9.5-9.5" stroke="#000" stroke-width="1.4"/><circle cx="45" cy="45" r="35.5" fill="#f0f0f0" stroke="#000" stroke-width="1"/><circle cx="45" cy="45" r="33.2" fill="url(#kb)" stroke="#000" stroke-width="1"/><circle cx="45" cy="45" r="27.8" fill="#999999" stroke="#000" stroke-width="1"/><path d="M41.3 42.5L27.2 33.0" stroke="#e8e8d0" stroke-width="2.3" stroke-linecap="round"/></svg>
<div class="cb" style="left:125px;top:264px;border-color:#c3c3c3"></div>
<span class="a" style="left:141px;top:265px;color:#8a8a8a">Invert</span>
<div class="cb" style="left:14px;top:306px"><svg width="11" height="11" style="position:absolute;left:0;top:0"><path d="M2 5.5l2.5 3l5-7" stroke="#222" stroke-width="1.2" fill="none"/></svg></div>
<span class="a" style="left:30px;top:308px;color:#111">CH2</span>
<div class="dd" style="left:14px;top:327px;width:74px">500mV<svg class="chev" viewBox="0 0 10 6"><path d="M1 0.8l4 4l4-4" stroke="#404040" stroke-width="1" fill="none"/></svg></div>
<div class="dd dis" style="left:14px;top:362px;width:74px">DC<svg class="chev" viewBox="0 0 10 6"><path d="M1 0.8l4 4l4-4" stroke="#a9a9a9" stroke-width="1" fill="none"/></svg></div>
<div class="dd" style="left:14px;top:397px;width:74px">x1<svg class="chev" viewBox="0 0 10 6"><path d="M1 0.8l4 4l4-4" stroke="#404040" stroke-width="1" fill="none"/></svg></div>
<svg class="a" style="left:102.0px;top:309.2px" width="90" height="90" viewBox="0 0 90 90"><defs><linearGradient id="kb" x1="0" y1="0" x2="1" y2="1"><stop offset="0.5" stop-color="#d6d6d6"/><stop offset="0.5" stop-color="#bfbfbf"/></linearGradient></defs><path d="M15 76l9.5-9.5M75 76l-9.5-9.5" stroke="#000" stroke-width="1.4"/><circle cx="45" cy="45" r="35.5" fill="#f0f0f0" stroke="#000" stroke-width="1"/><circle cx="45" cy="45" r="33.2" fill="url(#kb)" stroke="#000" stroke-width="1"/><circle cx="45" cy="45" r="27.8" fill="#22ee22" stroke="#000" stroke-width="1"/><path d="M44.3 40.0L41.9 22.7" stroke="#c8f0c8" stroke-width="2.3" stroke-linecap="round"/></svg>
<div class="cb" style="left:125px;top:404px"></div>
<span class="a" style="left:141px;top:405px;color:#111">Invert</span>
<span class="a" style="left:18px;top:478px;color:#111">Trigger Mode</span>
<div class="dd" style="left:114px;top:474px;width:74px">Edge<svg class="chev" viewBox="0 0 10 6"><path d="M1 0.8l4 4l4-4" stroke="#404040" stroke-width="1" fill="none"/></svg></div>
<span class="a" style="left:18px;top:513px;color:#111">Trigger Sweep</span>
<div class="dd" style="left:114px;top:509px;width:74px">AUTO<svg class="chev" viewBox="0 0 10 6"><path d="M1 0.8l4 4l4-4" stroke="#404040" stroke-width="1" fill="none"/></svg></div></div>
<div class="a" style="left:184px;top:67px;width:16px;height:542px;background:#f0f0f0"></div>
<div class="a" style="left:185px;top:84px;width:14px;height:356px;background:#cdcdcd"></div>
<svg class="a" style="left:184px;top:67px" width="16" height="542"><path d="M4.5 12l3.5-3.5l3.5 3.5" stroke="#606060" stroke-width="1.3" fill="none"/><path d="M4.5 530l3.5 3.5l3.5-3.5" stroke="#606060" stroke-width="1.3" fill="none"/></svg>
<div class="a" style="left:0;top:609px;width:184px;height:16px;background:#f0f0f0"></div>
<div class="a" style="left:17px;top:610px;width:127px;height:14px;background:#cdcdcd"></div>
<svg class="a" style="left:0;top:609px" width="184" height="16"><path d="M10.5 4.5l-3.5 3.5l3.5 3.5M172 4.5l3.5 3.5l-3.5 3.5" stroke="#606060" stroke-width="1.3" fill="none"/></svg>
</div>
<!-- status bar -->
<div id="status" class="a">
 <span class="a" style="left:4px;top:5px;font-size:12px">Running...</span>
 <span class="a" style="left:1262px;top:5px;font-size:12px;letter-spacing:-0.4px">01-12-2018&nbsp;&nbsp;16:29</span>
</div>
</body></html>
